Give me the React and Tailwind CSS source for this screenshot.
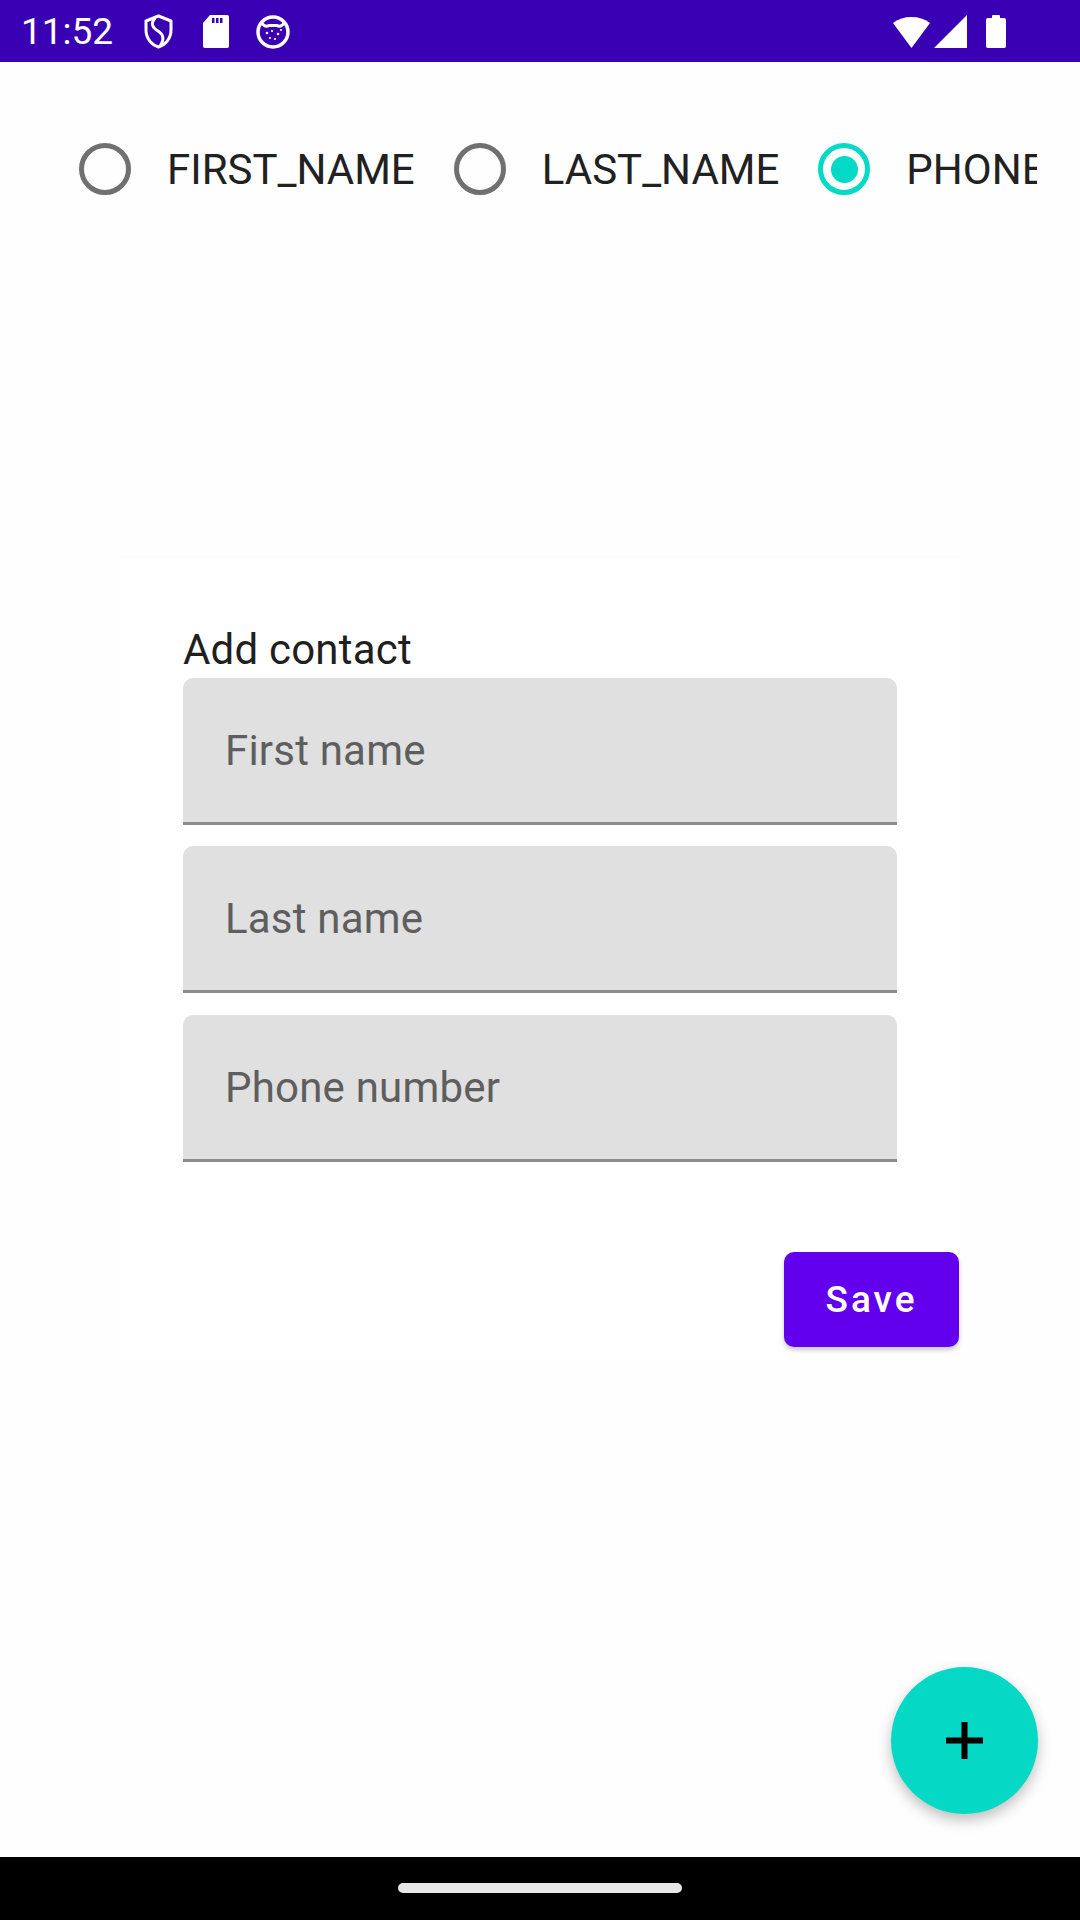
import React from 'react';

const font = { fontFamily: 'Roboto, "Noto Sans", sans-serif' };

// status bar glyphs
const StatusIcons = () => (
  <div className="flex items-center">
    <svg width="29" height="35" viewBox="0 0 29 35" className="ml-[31px]">
      <path d="M14.5 2 L27 7 V16 C27 25 21 31 14.5 33 C8 31 2 25 2 16 V7 Z" fill="none" stroke="#fff" strokeWidth="3" strokeLinejoin="round" />
      <path d="M11 4 C6 10 9 14 14 17 C19 20 21 25 16 32" fill="none" stroke="#fff" strokeWidth="3" />
    </svg>
    <svg width="26" height="33" viewBox="0 0 26 33" className="ml-[30px]">
      <path d="M7 0 H24 a2 2 0 0 1 2 2 V31 a2 2 0 0 1 -2 2 H2 a2 2 0 0 1 -2 -2 V8 Z" fill="#fff" />
      <rect x="9" y="3" width="2.5" height="5" fill="#3a00b3" />
      <rect x="13" y="3" width="2.5" height="5" fill="#3a00b3" />
      <rect x="17" y="3" width="2.5" height="5" fill="#3a00b3" />
    </svg>
    <svg width="34" height="35" viewBox="0 0 34 35" className="ml-[27px]">
      <circle cx="17" cy="18" r="15" fill="none" stroke="#fff" strokeWidth="3.5" />
      <path d="M5 8 Q9 14 13 11.5 H21 Q25 14 29 8" fill="none" stroke="#fff" strokeWidth="3" />
      <circle cx="11" cy="19" r="1.3" fill="#fff" />
      <circle cx="16" cy="17" r="1.1" fill="#fff" />
      <circle cx="22" cy="20" r="1.3" fill="#fff" />
      <circle cx="14" cy="24" r="1.1" fill="#fff" />
      <circle cx="19" cy="25" r="1.1" fill="#fff" />
      <circle cx="25" cy="16" r="1.1" fill="#fff" />
    </svg>
  </div>
);

const SystemIcons = () => (
  <div className="flex items-center">
    <svg width="39" height="33" viewBox="0 0 39 33">
      <path d="M1 8 A 32 32 0 0 1 38 8 L19.5 33 Z" fill="#fff" />
    </svg>
    <svg width="33" height="33" viewBox="0 0 33 33" className="ml-[3px]">
      <path d="M33 0 L33 33 L0 33 Z" fill="#fff" />
    </svg>
    <svg width="20" height="33" viewBox="0 0 20 33" className="ml-[19px]">
      <rect x="6" y="0" width="8" height="4" rx="1" fill="#fff" />
      <rect x="0" y="3" width="20" height="30" rx="2" fill="#fff" />
    </svg>
  </div>
);

const Radio = ({ label, checked, first }) => (
  <div className={`flex items-center shrink-0 ${first ? '' : 'ml-[39px]'}`}>
    {checked ? (
      <div className="w-[52px] h-[52px] rounded-full border-[5px] border-[#03dac5] flex items-center justify-center">
        <div className="w-[27px] h-[27px] rounded-full bg-[#03dac5]" />
      </div>
    ) : (
      <div className="w-[52px] h-[52px] rounded-full border-[5px] border-[#707070]" />
    )}
    <span className="ml-[36px] text-[42px] leading-[49px] text-[#212121] whitespace-nowrap">{label}</span>
  </div>
);

const Field = ({ placeholder, className = '' }) => (
  <div className={`w-[714px] h-[147px] bg-[#e0e0e0] rounded-t-[10px] border-b-[3px] border-[#8c8c8c] flex items-center pl-[42px] ${className}`}>
    <span className="text-[42px] leading-[49px] text-[#5e5e5e] tracking-[0.2px]">{placeholder}</span>
  </div>
);

export default function App() {
  return (
    <div className="w-[1080px] h-[1920px] flex flex-col overflow-hidden" style={font}>
      {/* status bar */}
      <div className="h-[62px] bg-[#3a00b3] flex items-center justify-between shrink-0">
        <div className="flex items-center pl-[21px]">
          <span className="text-white text-[37px] leading-none">11:52</span>
          <StatusIcons />
        </div>
        <div className="pr-[74px]">
          <SystemIcons />
        </div>
      </div>

      {/* content */}
      <div className="relative flex-1 bg-[#fefefe] flex flex-col">
        <div className="mt-[81px] ml-[79px] w-[958px] h-[52px] flex items-center overflow-hidden">
          <Radio label="FIRST_NAME" first />
          <Radio label="LAST_NAME" />
          <Radio label="PHONE" checked />
        </div>

        {/* add contact dialog */}
        <div className="mt-[363px] ml-[120px] w-[841px] h-[802px] bg-white shadow-[0_0_2px_rgba(0,0,0,0.025)] flex flex-col pt-[67px] pl-[63px]">
          <span className="text-[42px] leading-[49px] text-[#1f1f1f] tracking-[0.2px]">Add contact</span>
          <Field placeholder="First name" className="mt-[4px]" />
          <Field placeholder="Last name" className="mt-[21px]" />
          <Field placeholder="Phone number" className="mt-[22px]" />
          <div className="flex justify-end pr-[2px] mt-[90px]">
            <button className="w-[175px] h-[95px] bg-[#6200ee] rounded-[10px] shadow-[0_3px_5px_rgba(0,0,0,0.22)] text-white text-[37px] font-medium tracking-[3px] flex items-center justify-center">
              Save
            </button>
          </div>
        </div>

        {/* fab */}
        <button className="absolute right-[42px] bottom-[43px] w-[147px] h-[147px] rounded-full bg-[#05d9c5] shadow-[0_6px_14px_rgba(0,0,0,0.25)] flex items-center justify-center">
          <svg width="37" height="37" viewBox="0 0 37 37">
            <rect x="15.5" y="0" width="6" height="37" fill="#000" />
            <rect x="0" y="15.5" width="37" height="6" fill="#000" />
          </svg>
        </button>
      </div>

      {/* nav bar */}
      <div className="h-[63px] bg-black shrink-0 flex items-start justify-center">
        <div className="mt-[26px] w-[284px] h-[10px] rounded-full bg-[#e8e8e8]" />
      </div>
    </div>
  );
}
